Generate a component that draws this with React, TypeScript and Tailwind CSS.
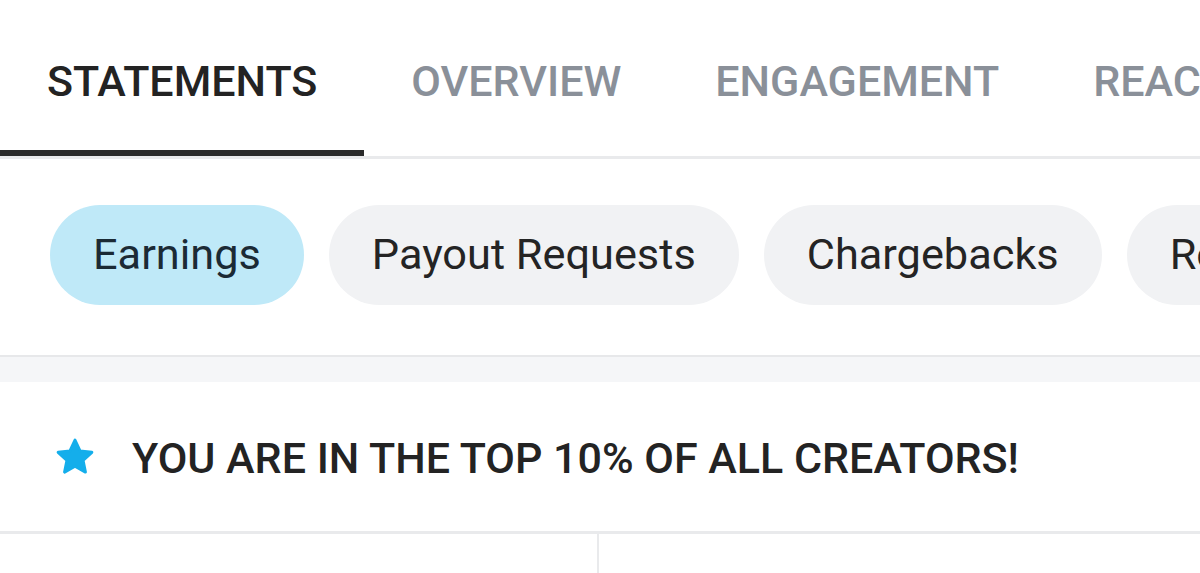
import React from "react";

const tabs = ["STATEMENTS", "OVERVIEW", "ENGAGEMENT", "REACH", "AUDIENCE"];
const chips = ["Earnings", "Payout Requests", "Chargebacks", "Referrals"];

function Star() {
  return (
    <svg width="46" height="44" viewBox="0 0 24 24" className="shrink-0">
      <path
        d="M12 2.8l2.75 5.9 6.45.75-4.8 4.4 1.3 6.4L12 17.05 6.3 20.25l1.3-6.4-4.8-4.4 6.45-.75z"
        fill="#14aeeb"
        stroke="#14aeeb"
        strokeWidth="1.6"
        strokeLinejoin="round"
      />
    </svg>
  );
}

export default function App() {
  return (
    <div
      className="w-[1200px] h-[573px] overflow-hidden bg-white"
      style={{ fontFamily: "Roboto, 'Liberation Sans', sans-serif" }}
    >
      {/* Tabs */}
      <div className="flex whitespace-nowrap border-b-[3px] border-[#e9eaec]">
        {tabs.map((t, i) => (
          <div
            key={t}
            className={`relative flex h-[156px] shrink-0 items-center px-[47px] pt-[6px] text-[43px] font-medium ${
              i === 0 ? "text-[#232323]" : "text-[#8a9099]"
            }`}
          >
            {t}
            {i === 0 && (
              <div className="absolute bottom-0 left-0 right-0 h-[6px] bg-[#2a2a2a]" />
            )}
          </div>
        ))}
      </div>

      {/* Chips */}
      <div className="flex h-[196px] items-center gap-[25px] whitespace-nowrap px-[50px] pb-[4px]">
        {chips.map((c, i) => (
          <div
            key={c}
            className={`flex h-[100px] shrink-0 items-center rounded-full px-[43px] text-[43.3px] ${
              i === 0 ? "bg-[#bfe9f8] text-[#1b2a35]" : "bg-[#f1f2f4] text-[#242424]"
            }`}
          >
            {c}
          </div>
        ))}
      </div>

      <div className="h-[27px] border-t-2 border-[#e7e8ea] bg-[#f5f6f8]" />

      {/* Banner */}
      <div className="flex h-[152px] items-center gap-[34px] border-b-[3px] border-[#e9eaec] pl-[52px]">
        <Star />
        <div className="pt-[4px] text-[43px] font-medium text-[#232323]">
          YOU ARE IN THE TOP 10% OF ALL CREATORS!
        </div>
      </div>

      <div className="grid h-[60px] grid-cols-[599px_1fr]">
        <div className="border-r-2 border-[#e9eaec]" />
        <div />
      </div>
    </div>
  );
}
